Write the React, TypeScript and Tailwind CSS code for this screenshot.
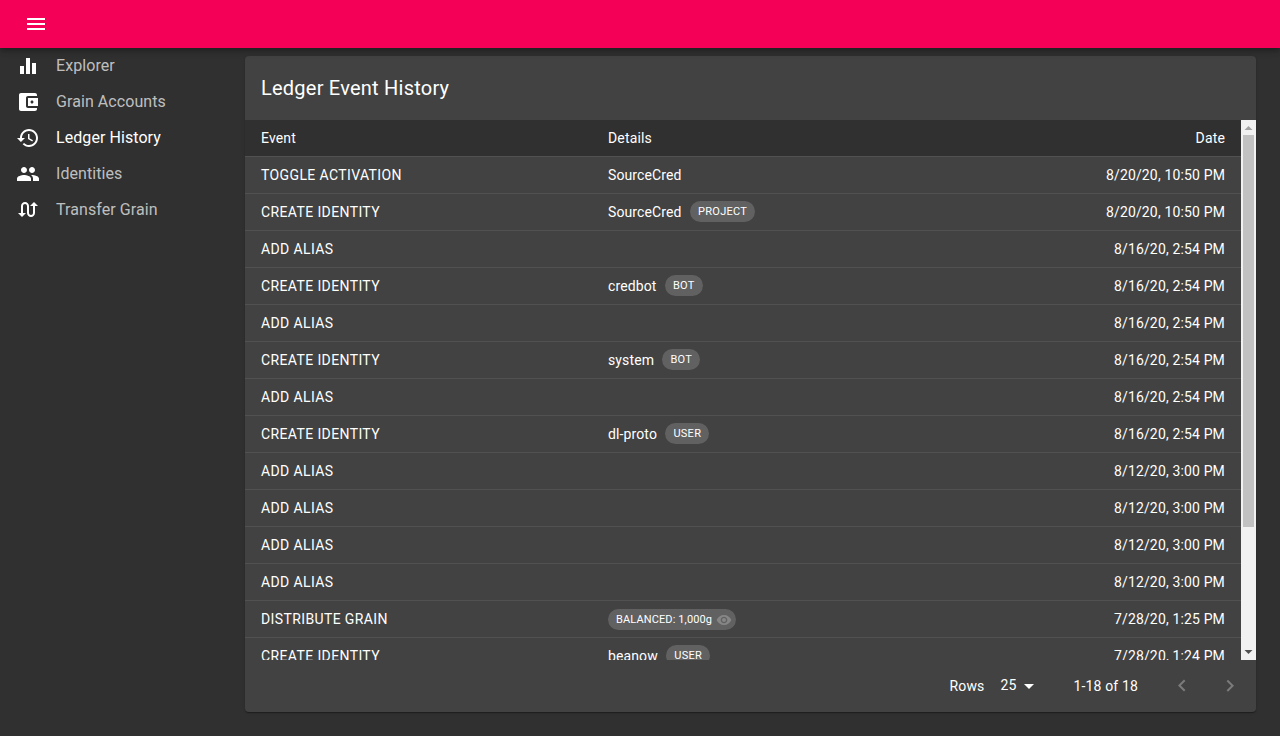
import type { ReactNode } from "react";

const ICONS = {
  menu: "M3 18h18v-2H3v2zm0-5h18v-2H3v2zm0-7v2h18V6H3z",
  equalizer: "M10 20h4V4h-4v16zm-6 0h4v-8H4v8zM16 9v11h4V9h-4z",
  wallet:
    "M21 18v1c0 1.1-.9 2-2 2H5c-1.11 0-2-.9-2-2V5c0-1.1.89-2 2-2h14c1.1 0 2 .9 2 2v1h-9c-1.11 0-2 .9-2 2v8c0 1.1.89 2 2 2h9zm-9-2h10V8H12v8zm4-2.5c-.83 0-1.5-.67-1.5-1.5s.67-1.5 1.5-1.5 1.5.67 1.5 1.5-.67 1.5-1.5 1.5z",
  history:
    "M13 3c-4.97 0-9 4.03-9 9H1l3.89 3.89.07.14L9 12H6c0-3.87 3.13-7 7-7s7 3.13 7 7-3.13 7-7 7c-1.93 0-3.68-.79-4.94-2.06l-1.42 1.42C8.27 19.99 10.51 21 13 21c4.97 0 9-4.03 9-9s-4.03-9-9-9zm-1 5v5l4.28 2.54.72-1.21-3.5-2.08V8H12z",
  people:
    "M16 11c1.66 0 2.99-1.34 2.99-3S17.66 5 16 5c-1.66 0-3 1.34-3 3s1.34 3 3 3zm-8 0c1.66 0 2.99-1.34 2.99-3S9.66 5 8 5C6.34 5 5 6.34 5 8s1.34 3 3 3zm0 2c-2.33 0-7 1.17-7 3.5V19h14v-2.5c0-2.33-4.67-3.5-7-3.5zm8 0c-.29 0-.62.02-.97.05 1.16.84 1.97 1.97 1.97 3.45V19h6v-2.5c0-2.33-4.67-3.5-7-3.5z",
  swap: "M18 4l-4 4h3v7c0 1.1-.9 2-2 2s-2-.9-2-2V8c0-2.21-1.79-4-4-4S5 5.79 5 8v7H2l4 4 4-4H7V8c0-1.1.9-2 2-2s2 .9 2 2v7c0 2.21 1.79 4 4 4s4-1.79 4-4V8h3l-4-4z",
  eye: "M12 4.5C7 4.5 2.73 7.61 1 12c1.73 4.39 6 7.5 11 7.5s9.27-3.11 11-7.5c-1.73-4.39-6-7.5-11-7.5zM12 17c-2.76 0-5-2.24-5-5s2.24-5 5-5 5 2.24 5 5-2.24 5-5 5zm0-8c-1.66 0-3 1.34-3 3s1.34 3 3 3 3-1.34 3-3-1.34-3-3-3z",
  dropDown: "M7 10l5 5 5-5z",
  left: "M15.41 16.09l-4.58-4.59 4.58-4.59L14 5.5l-6 6 6 6z",
  right: "M8.59 16.34l4.58-4.59-4.58-4.59L10 5.75l6 6-6 6z",
};

function Icon({ name, className = "size-6" }: { name: keyof typeof ICONS; className?: string }) {
  return (
    <svg viewBox="0 0 24 24" fill="currentColor" className={`shrink-0 ${className}`}>
      <path d={ICONS[name]} />
    </svg>
  );
}

const NAV: { icon: keyof typeof ICONS; label: string; active?: boolean }[] = [
  { icon: "equalizer", label: "Explorer" },
  { icon: "wallet", label: "Grain Accounts" },
  { icon: "history", label: "Ledger History", active: true },
  { icon: "people", label: "Identities" },
  { icon: "swap", label: "Transfer Grain" },
];

type LedgerEvent = { event: string; name?: string; tag?: string; grain?: string; date: string };

const EVENTS: LedgerEvent[] = [
  { event: "Toggle Activation", name: "SourceCred", date: "8/20/20, 10:50 PM" },
  { event: "Create Identity", name: "SourceCred", tag: "PROJECT", date: "8/20/20, 10:50 PM" },
  { event: "Add Alias", date: "8/16/20, 2:54 PM" },
  { event: "Create Identity", name: "credbot", tag: "BOT", date: "8/16/20, 2:54 PM" },
  { event: "Add Alias", date: "8/16/20, 2:54 PM" },
  { event: "Create Identity", name: "system", tag: "BOT", date: "8/16/20, 2:54 PM" },
  { event: "Add Alias", date: "8/16/20, 2:54 PM" },
  { event: "Create Identity", name: "dl-proto", tag: "USER", date: "8/16/20, 2:54 PM" },
  { event: "Add Alias", date: "8/12/20, 3:00 PM" },
  { event: "Add Alias", date: "8/12/20, 3:00 PM" },
  { event: "Add Alias", date: "8/12/20, 3:00 PM" },
  { event: "Add Alias", date: "8/12/20, 3:00 PM" },
  { event: "Distribute Grain", grain: "BALANCED: 1,000g", date: "7/28/20, 1:25 PM" },
  { event: "Create Identity", name: "beanow", tag: "USER", date: "7/28/20, 1:24 PM" },
];

function Chip({ children }: { children: ReactNode }) {
  return (
    <span className="flex h-[21px] items-center rounded-full bg-[#616161] text-[11px] leading-none">
      {children}
    </span>
  );
}

function Row({ row }: { row: LedgerEvent }) {
  return (
    <tr>
      <td className="h-[37px] border-b border-[#515151] px-4 tracking-[0.38px] uppercase">{row.event}</td>
      <td className="h-[37px] border-b border-[#515151] px-4">
        <div className="flex h-6 items-center">
          {row.name && <span className="mr-[8.4px] tracking-[0.12px]">{row.name}</span>}
          {row.tag && (
            <div className="pb-px">
              <Chip>
                <span className="px-2 tracking-[0.27px]">{row.tag}</span>
              </Chip>
            </div>
          )}
          {row.grain && (
            <div className="pt-px">
              <Chip>
                <span className="pr-1 pl-2 tracking-[0.12px]">{row.grain}</span>
                <Icon name="eye" className="mr-1 size-4 text-[#868686]" />
              </Chip>
            </div>
          )}
        </div>
      </td>
      <td className="h-[37px] border-b border-[#515151] px-4 text-right">{row.date}</td>
    </tr>
  );
}

function ScrollBar() {
  return (
    <div className="flex w-[15px] shrink-0 flex-col bg-[#f1f1f1]">
      <svg viewBox="0 0 15 15" className="size-[15px]">
        <path d="M3.5 10L7.5 6l4 4z" fill="#a3a3a3" />
      </svg>
      <div className="mx-[2px] h-[392px] bg-[#c1c1c1]" />
      <svg viewBox="0 0 15 15" className="mt-auto size-[15px]">
        <path d="M3.5 5L7.5 9l4-4z" fill="#505050" />
      </svg>
    </div>
  );
}

export default function App() {
  return (
    <div className="flex h-[736px] flex-col overflow-hidden bg-[#303030] font-[Roboto,sans-serif] text-white">
      <header className="z-10 flex h-12 shrink-0 items-center bg-[#f50057] pl-6 shadow-[0px_2px_4px_-1px_rgba(0,0,0,0.2),0px_4px_5px_0px_rgba(0,0,0,0.14),0px_1px_10px_0px_rgba(0,0,0,0.12)]">
        <Icon name="menu" />
      </header>

      <div className="flex min-h-0 flex-1">
        <nav className="w-[245px] shrink-0">
          {NAV.map((item) => (
            <a key={item.label} className="flex h-9 items-center pl-4">
              <Icon name={item.icon} />
              <span
                className={`pl-4 text-base tracking-[0.07px] ${item.active ? "text-white" : "text-white/70"}`}
              >
                {item.label}
              </span>
            </a>
          ))}
        </nav>

        <main className="mt-2 mr-6 mb-6 flex min-w-0 flex-1 flex-col rounded bg-[#424242] shadow-[0px_2px_1px_-1px_rgba(0,0,0,0.2),0px_1px_1px_0px_rgba(0,0,0,0.14),0px_1px_3px_0px_rgba(0,0,0,0.12)]">
          <h1 className="flex h-16 shrink-0 items-center px-4 text-xl tracking-[0.23px]">Ledger Event History</h1>

          <div className="flex h-[540px] shrink-0">
            <div className="min-w-0 flex-1 overflow-hidden">
              <table className="w-full table-fixed border-separate border-spacing-0 text-sm tracking-[0.15px]">
                <thead>
                  <tr className="bg-[#303030] text-left">
                    <th className="h-[37px] w-[347px] border-b border-[#515151] px-4 font-normal">Event</th>
                    <th className="h-[37px] border-b border-[#515151] px-4 font-normal">Details</th>
                    <th className="h-[37px] border-b border-[#515151] px-4 text-right font-normal">Date</th>
                  </tr>
                </thead>
                <tbody>
                  {EVENTS.map((row, i) => (
                    <Row key={i} row={row} />
                  ))}
                </tbody>
              </table>
            </div>
            <ScrollBar />
          </div>

          <footer className="flex h-[52px] shrink-0 items-center justify-end pr-[14px] text-sm tracking-[0.15px]">
            <span>Rows</span>
            <div className="mr-8 ml-4 flex items-center">
              <span className="w-[17px] pb-0.5">25</span>
              <Icon name="dropDown" />
            </div>
            <span>1-18 of 18</span>
            <div className="ml-8 flex gap-6 text-[#7b7b7b]">
              <Icon name="left" />
              <Icon name="right" />
            </div>
          </footer>
        </main>
      </div>
    </div>
  );
}
